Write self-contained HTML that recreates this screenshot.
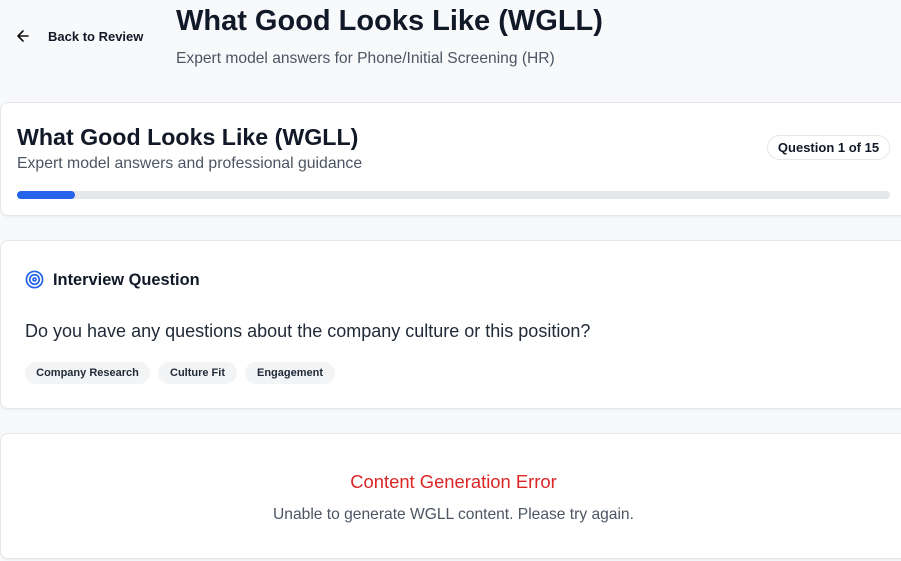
<!DOCTYPE html>
<html><head><style>
*{box-sizing:border-box;margin:0;padding:0}
body{width:901px;height:561px;overflow:hidden;background:#f8f9fb;font-family:"Liberation Sans",sans-serif;color:#111827;position:relative}
.a{position:absolute;white-space:nowrap}
.card{position:absolute;left:0;width:920px;background:#fff;border:1px solid #e5e7eb;border-radius:8px;box-shadow:0 1px 2px rgba(0,0,0,.05)}
.tag{position:absolute;top:362px;height:22px;background:#f3f4f6;border-radius:11px;font-size:11px;font-weight:bold;line-height:22px;text-align:center;color:#1f2937}
</style></head><body>
<svg class="a" style="left:16px;top:29px" width="14" height="14" viewBox="0 0 14 14"><path d="M12 7H2M7 2L2 7l5 5" fill="none" stroke="#111" stroke-width="1.6" stroke-linecap="round" stroke-linejoin="round"/></svg>
<div class="a" style="left:48px;top:29px;font-size:13px;font-weight:bold;color:#111827">Back to Review</div>
<div class="a" style="left:176px;top:5px;font-size:29px;font-weight:bold;color:#111827">What Good Looks Like (WGLL)</div>
<div class="a" style="left:176px;top:50px;font-size:15.6px;color:#4b5563">Expert model answers for Phone/Initial Screening (HR)</div>

<div class="card" style="top:102px;height:114px"></div>
<div class="a" style="left:17px;top:124px;font-size:23.2px;font-weight:bold;color:#111827">What Good Looks Like (WGLL)</div>
<div class="a" style="left:17px;top:155px;font-size:15.8px;color:#4b5563">Expert model answers and professional guidance</div>
<div class="a" style="left:767px;top:135px;width:123px;height:25px;border:1px solid #e5e7eb;border-radius:13px;font-size:13px;font-weight:bold;line-height:23px;text-align:center">Question 1 of 15</div>
<div class="a" style="left:17px;top:191px;width:873px;height:8px;background:#e5e7eb;border-radius:4px"></div>
<div class="a" style="left:17px;top:191px;width:58px;height:8px;background:#2563eb;border-radius:4px"></div>

<div class="card" style="top:240px;height:169px"></div>
<svg class="a" style="left:25px;top:270px" width="19" height="19" viewBox="0 0 20 20"><g fill="none" stroke="#2563eb" stroke-width="1.8"><circle cx="10" cy="10" r="8.5"/><circle cx="10" cy="10" r="5"/><circle cx="10" cy="10" r="1.6"/></g></svg>
<div class="a" style="left:53px;top:271px;font-size:16.4px;font-weight:bold">Interview Question</div>
<div class="a" style="left:25px;top:321px;font-size:18px;color:#1f2937">Do you have any questions about the company culture or this position?</div>
<div class="tag" style="left:25px;width:125px">Company Research</div>
<div class="tag" style="left:158px;width:79px">Culture Fit</div>
<div class="tag" style="left:245px;width:90px">Engagement</div>

<div class="card" style="top:433px;height:126px"></div>
<div class="a" style="left:0;width:907px;text-align:center;top:471px;font-size:18.4px;color:#dc2626">Content Generation Error</div>
<div class="a" style="left:0;width:907px;text-align:center;top:506px;font-size:15.6px;color:#4b5563">Unable to generate WGLL content. Please try again.</div>
</body></html>
